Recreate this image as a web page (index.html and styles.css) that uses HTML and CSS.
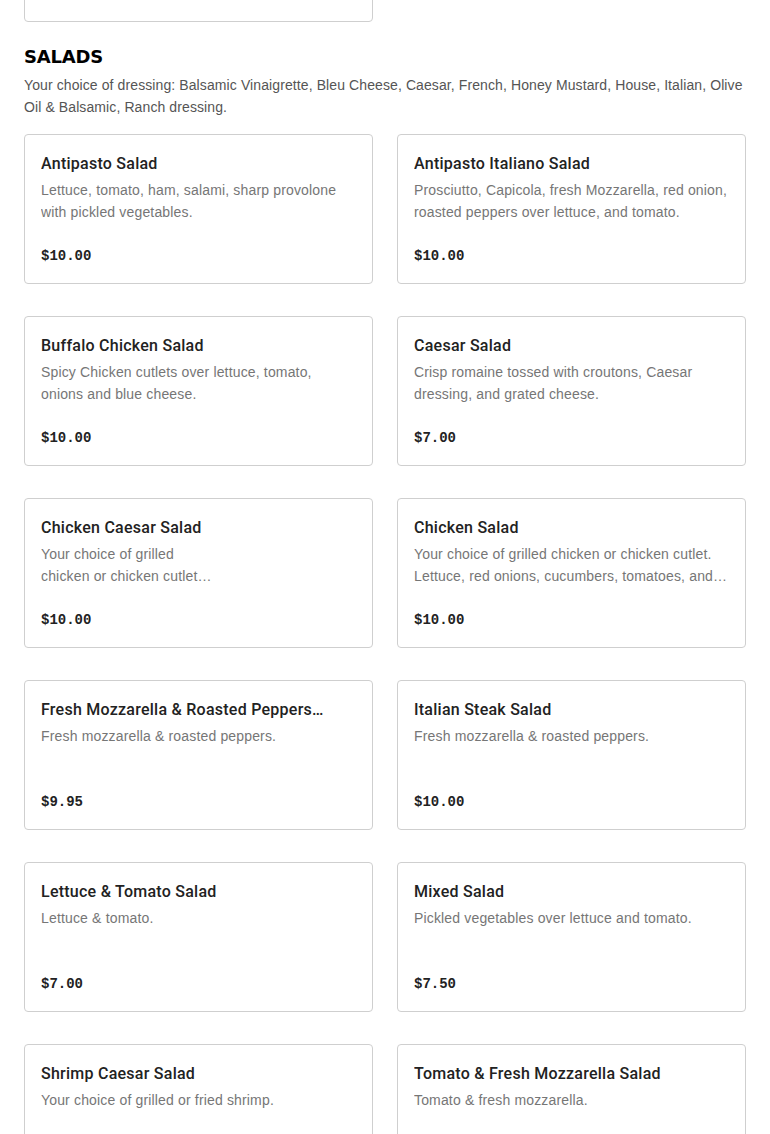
FILE: index.html
```html
<!DOCTYPE html>
<html lang="en">
<head>
<meta charset="utf-8">
<title>Menu - Salads</title>
<link rel="stylesheet" href="styles.css">
</head>
<body>
<main class="menu">
  <section class="section section--prev">
    <div class="grid">
      <article class="card">
        <h3 class="card-title">Garden Wrap</h3>
        <p class="card-desc">Lettuce, tomato, cucumbers and onions.</p>
        <p class="card-price">$8.00</p>
      </article>
    </div>
  </section>

  <section class="section">
    <h2 class="section-title">SALADS</h2>
    <p class="section-desc">Your choice of dressing: Balsamic Vinaigrette, Bleu Cheese, Caesar, French, Honey Mustard, House, Italian, Olive Oil &amp; Balsamic, Ranch dressing.</p>
    <div class="grid">
      <article class="card">
        <h3 class="card-title">Antipasto Salad</h3>
        <p class="card-desc">Lettuce, tomato, ham, salami, sharp provolone with pickled vegetables.</p>
        <p class="card-price">$10.00</p>
      </article>
      <article class="card">
        <h3 class="card-title">Antipasto Italiano Salad</h3>
        <p class="card-desc">Prosciutto, Capicola, fresh Mozzarella, red onion, roasted peppers over lettuce, and tomato.</p>
        <p class="card-price">$10.00</p>
      </article>
      <article class="card">
        <h3 class="card-title">Buffalo Chicken Salad</h3>
        <p class="card-desc">Spicy Chicken cutlets over lettuce, tomato, onions and blue cheese.</p>
        <p class="card-price">$10.00</p>
      </article>
      <article class="card">
        <h3 class="card-title">Caesar Salad</h3>
        <p class="card-desc">Crisp romaine tossed with croutons, Caesar dressing, and grated cheese.</p>
        <p class="card-price">$7.00</p>
      </article>
      <article class="card">
        <h3 class="card-title">Chicken Caesar Salad</h3>
        <p class="card-desc">Your choice of grilled<br>chicken or chicken cutlet<br>over Caesar salad.</p>
        <p class="card-price">$10.00</p>
      </article>
      <article class="card">
        <h3 class="card-title">Chicken Salad</h3>
        <p class="card-desc">Your choice of grilled chicken or chicken cutlet.<br>Lettuce, red onions, cucumbers, tomatoes, and olives.</p>
        <p class="card-price">$10.00</p>
      </article>
      <article class="card">
        <h3 class="card-title">Fresh Mozzarella &amp; Roasted Peppers Salad</h3>
        <p class="card-desc">Fresh mozzarella &amp; roasted peppers.</p>
        <p class="card-price">$9.95</p>
      </article>
      <article class="card">
        <h3 class="card-title">Italian Steak Salad</h3>
        <p class="card-desc">Fresh mozzarella &amp; roasted peppers.</p>
        <p class="card-price">$10.00</p>
      </article>
      <article class="card">
        <h3 class="card-title">Lettuce &amp; Tomato Salad</h3>
        <p class="card-desc">Lettuce &amp; tomato.</p>
        <p class="card-price">$7.00</p>
      </article>
      <article class="card">
        <h3 class="card-title">Mixed Salad</h3>
        <p class="card-desc">Pickled vegetables over lettuce and tomato.</p>
        <p class="card-price">$7.50</p>
      </article>
      <article class="card">
        <h3 class="card-title">Shrimp Caesar Salad</h3>
        <p class="card-desc">Your choice of grilled or fried shrimp.</p>
        <p class="card-price">$12.00</p>
      </article>
      <article class="card">
        <h3 class="card-title">Tomato &amp; Fresh Mozzarella Salad</h3>
        <p class="card-desc">Tomato &amp; fresh mozzarella.</p>
        <p class="card-price">$9.00</p>
      </article>
    </div>
  </section>
</main>
</body>
</html>
```

FILE: styles.css
```css
* { box-sizing: border-box; }

html, body {
  margin: 0;
  padding: 0;
  background: #fff;
}

body {
  font-family: "Liberation Sans", Arial, sans-serif;
  color: #222;
  overflow: hidden;
}

.menu {
  padding: 0 24px;
  margin-top: -128px;
}

.section + .section {
  margin-top: 24px;
}

.section-title {
  margin: 0 0 6px;
  font-family: "DejaVu Sans", sans-serif;
  font-weight: 700;
  font-size: 18px;
  line-height: 22px;
  letter-spacing: -0.2px;
  color: #000;
}

.section-desc {
  margin: 0 0 16px;
  font-size: 14px;
  line-height: 22px;
  letter-spacing: 0.1px;
  color: #555;
}

.grid {
  display: grid;
  grid-template-columns: 1fr 1fr;
  column-gap: 24px;
  row-gap: 32px;
}

.card {
  border: 1px solid #cfcfcf;
  border-radius: 4px;
  padding: 16px;
  height: 150px;
  background: #fff;
}

.card-title {
  margin: 0 0 4px;
  padding-top: 1px;
  height: 24px;
  font-family: "Roboto", sans-serif;
  font-weight: 500;
  font-size: 16px;
  line-height: 23px;
  letter-spacing: 0.25px;
  color: #222;
  display: -webkit-box;
  -webkit-box-orient: vertical;
  -webkit-line-clamp: 1;
  overflow: hidden;
}

.card-desc {
  margin: 0 0 23px;
  font-size: 14px;
  line-height: 22px;
  height: 44px;
  letter-spacing: 0.16px;
  color: #767676;
  display: -webkit-box;
  -webkit-box-orient: vertical;
  -webkit-line-clamp: 2;
  overflow: hidden;
}

.card-price {
  margin: 0;
  font-family: "Liberation Mono", "Courier New", monospace;
  font-weight: 700;
  font-size: 14px;
  line-height: 21px;
  color: #222;
}
```
